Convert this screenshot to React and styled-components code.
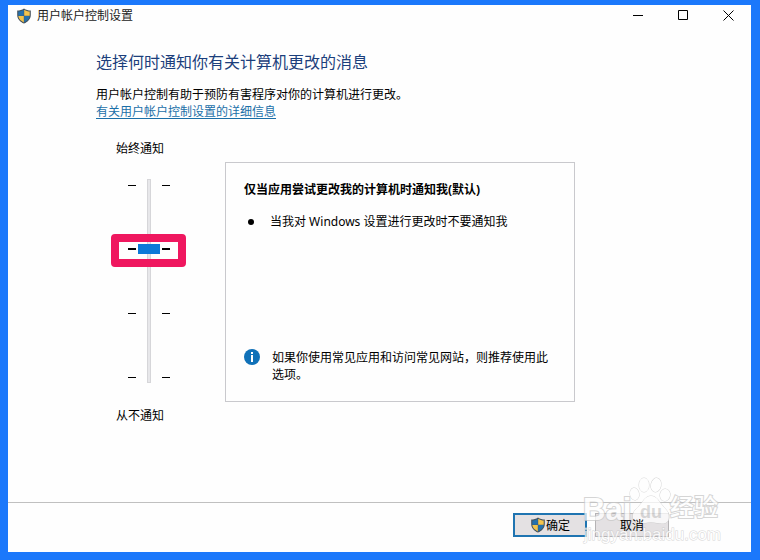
import React, { useState } from "react";
import styled, { createGlobalStyle } from "styled-components";

const GlobalStyle = createGlobalStyle`
  *, *::before, *::after { box-sizing: border-box; }
  body {
    margin: 0;
    font: 12px/17px "Noto Sans", "Noto Sans CJK SC", sans-serif;
    color: #000;
  }
  h1, h2, p, ul { margin: 0; padding: 0; }
  button { font: inherit; color: inherit; }
`;

const Desktop = styled.div`
  min-height: 100vh;
  display: flex;
  padding: 5px 9px 8px 8px;
  background: #1b78fb;
`;

const Window = styled.div`
  position: relative;
  flex: 1;
  display: flex;
  flex-direction: column;
  background: #fefefe;
`;

const TitleBar = styled.header`
  display: flex;
  align-items: center;
  height: 21px;
  padding-left: 8px;
`;

const Title = styled.span`
  flex: 1;
  margin-left: 5px;
  color: #222;
`;

const CaptionButton = styled.button`
  display: flex;
  align-items: center;
  justify-content: center;
  width: 45px;
  height: 21px;
  padding: 0;
  border: 0;
  background: transparent;
`;

const Main = styled.main`
  flex: 1;
  padding: 24px 88px 20px;
`;

const Heading = styled.h1`
  margin-bottom: 12px;
  font-size: 16px;
  line-height: 24px;
  font-weight: 400;
  color: #1c3f7c;
`;

const Link = styled.a`
  color: #1a6fa8;
  text-decoration: underline;
  text-underline-offset: 2px;
`;

const Settings = styled.div`
  display: grid;
  grid-template-columns: 88px minmax(0, 350px);
  column-gap: 41px;
  align-items: start;
  margin-top: 20px;
`;

const LevelPicker = styled.div`
  display: flex;
  flex-direction: column;
  align-items: center;
`;

const Scale = styled.div`
  position: relative;
  display: grid;
  grid-template-columns: 8px 22px 8px;
  column-gap: 2px;
  height: 204px;
  margin: 22px 0 24px 18px;
`;

const Ticks = styled.div`
  display: flex;
  flex-direction: column;
  justify-content: space-between;
  padding: 6px 0 5px;
`;

const Tick = styled.span`
  height: 1px;
  background: #000;
  box-shadow: ${(p) => (p.$current ? "0 -1px #000" : "none")};
`;

const Slider = styled.input`
  appearance: none;
  writing-mode: vertical-lr;
  direction: rtl;
  width: 22px;
  height: 204px;
  margin: 0;
  background: transparent;

  &::-webkit-slider-runnable-track {
    width: 4px;
    height: 204px;
    background: #e7e7ea;
    border: 1px solid #d6d6d9;
  }
  &::-webkit-slider-thumb {
    appearance: none;
    width: 22px;
    height: 12px;
    margin-left: -10px;
    border: solid transparent;
    border-width: 1px 0;
    background: #0c79d8;
    background-clip: padding-box;
  }
`;

const Highlight = styled.div`
  position: absolute;
  left: -17px;
  top: 55px;
  width: 75px;
  height: 33px;
  border: 8px solid #ef175f;
  border-radius: 4px;
  pointer-events: none;
`;

const LevelLabel = styled.label`
  display: block;
`;

const Panel = styled.section`
  display: flex;
  flex-direction: column;
  min-height: 240px;
  margin-top: 22px;
  padding: 18px;
  border: 1px solid #c9c9cd;
`;

const PanelTitle = styled.h2`
  font-size: 12px;
  line-height: 17px;
  font-weight: 700;
`;

const Bullets = styled.ul`
  margin-top: 15px;
  list-style: none;
`;

const Bullet = styled.li`
  display: flex;
  align-items: center;
  gap: 16px;
  padding-left: 4px;

  &::before {
    content: "";
    width: 6px;
    height: 6px;
    border-radius: 50%;
    background: #000;
  }
`;

const Recommendation = styled.div`
  display: flex;
  gap: 12px;
  margin-top: auto;
`;

const Footer = styled.footer`
  display: flex;
  justify-content: flex-end;
  gap: 8px;
  height: 50px;
  padding: 10px 82px 0 8px;
  border-top: 1px solid #c0c0c0;
`;

const DialogButton = styled.button`
  display: flex;
  align-items: center;
  justify-content: center;
  width: 74px;
  height: 24px;
  padding: 0;
  background: #e4e1e3;
  border: ${(p) => (p.$primary ? "2px solid #1f74b1" : "1px solid #b5b3b5")};
`;

const ButtonLabel = styled.span`
  position: relative;
  z-index: 1;
`;

const Watermark = styled.div`
  position: absolute;
  right: 30px;
  bottom: 8px;
  width: 138px;
  height: 68px;
  font-family: "Liberation Sans", "Noto Sans CJK SC", sans-serif;
  color: #fff;
  opacity: 0.75;
  paint-order: stroke fill;
  white-space: nowrap;
  pointer-events: none;
`;

const PawDrawing = styled.svg`
  position: absolute;
  left: 46px;
  top: 0;
`;

const MarkText = styled.span`
  position: absolute;
  left: ${(p) => p.$left}px;
  top: ${(p) => p.$top}px;
  font-size: ${(p) => p.$size}px;
  font-weight: ${(p) => p.$weight};
  line-height: ${(p) => p.$size}px;
  color: ${(p) => p.$color || "#fff"};
  -webkit-text-stroke: ${(p) => p.$stroke}px #c8c8c8;
`;

function Shield() {
  return (
    <svg width="16" height="16" viewBox="0 0 16 16" aria-hidden="true">
      <path d="M8 .5C6 2 3.600 2.600 1.200 2.600V7c0 4 2.800 6.800 6.800 8.600C12 13.800 14.800 11 14.800 7V2.600C12.400 2.600 10 2 8 .5Z" fill="#45525c" />
      <path d="M7.800 1.800C6 3 4.100 3.500 2.300 3.600v4.100h5.500Z" fill="#2471ad" />
      <path d="M8.200 1.800C10 3 11.900 3.500 13.700 3.600v4.100H8.200Z" fill="#f3c44d" />
      <path d="M2.300 8.100h5.500v6.300C4.700 12.900 2.600 11 2.300 8.100Z" fill="#f3c44d" />
      <path d="M13.700 8.100H8.200v6.300c3.100-1.500 5.200-3.400 5.500-6.300Z" fill="#2471ad" />
    </svg>
  );
}

function InfoIcon() {
  return (
    <svg width="16" height="16" viewBox="0 0 16 16" aria-hidden="true">
      <circle cx="8" cy="8" r="8" fill="#1071b8" />
      <rect x="7" y="3" width="2" height="2" fill="#fff" />
      <rect x="7" y="6" width="2" height="7" fill="#fff" />
    </svg>
  );
}

function CaptionIcon({ d }) {
  return (
    <svg width="11" height="11" viewBox="0 0 11 11" fill="none" stroke="#000" aria-hidden="true">
      <path d={d} />
    </svg>
  );
}

function Paw() {
  return (
    <PawDrawing width="44" height="52" viewBox="0 0 44 52" fill="#fff" stroke="#c8c8c8" aria-hidden="true">
      <ellipse cx="5.500" cy="18" rx="4.500" ry="6" transform="rotate(-10 5.500 18)" />
      <ellipse cx="15" cy="9" rx="5" ry="7" />
      <ellipse cx="27" cy="9" rx="5" ry="7" transform="rotate(12 27 9)" />
      <ellipse cx="36" cy="19" rx="5" ry="6" transform="rotate(12 36 19)" />
      <path d="M22 20c-6 0-8 6-12 10-4 4-7 7-6 12 2 6 8 6 12 5 4-1 8-1 12 0 6 1 11 1 12-5 1-5-3-8-6-12-4-4-6-10-12-10Z" />
    </PawDrawing>
  );
}

function TickColumn({ current }) {
  return (
    <Ticks aria-hidden="true">
      {[3, 2, 1, 0].map((n) => (
        <Tick key={n} $current={n === current} />
      ))}
    </Ticks>
  );
}

export default function App() {
  const [level, setLevel] = useState(2);
  return (
    <Desktop>
      <GlobalStyle />
      <Window>
        <TitleBar>
          <Shield />
          <Title>用户帐户控制设置</Title>
          <CaptionButton aria-label="最小化">
            <CaptionIcon d="M0 5.500h10" />
          </CaptionButton>
          <CaptionButton aria-label="最大化">
            <CaptionIcon d="M.5 .5h9v9h-9Z" />
          </CaptionButton>
          <CaptionButton aria-label="关闭">
            <CaptionIcon d="M.5 .5l10 10M10.500 .5L.5 10.500" />
          </CaptionButton>
        </TitleBar>

        <Main>
          <Heading>选择何时通知你有关计算机更改的消息</Heading>
          <p>用户帐户控制有助于预防有害程序对你的计算机进行更改。</p>
          <p>
            <Link href="#details">有关用户帐户控制设置的详细信息</Link>
          </p>

          <Settings>
            <LevelPicker>
              <LevelLabel htmlFor="level">始终通知</LevelLabel>
              <Scale>
                <TickColumn current={level} />
                <Slider
                  id="level"
                  type="range"
                  min="0"
                  max="3"
                  value={level}
                  onChange={(e) => setLevel(Number(e.target.value))}
                />
                <TickColumn current={level} />
                <Highlight />
              </Scale>
              <LevelLabel htmlFor="level">从不通知</LevelLabel>
            </LevelPicker>

            <Panel>
              <PanelTitle>仅当应用尝试更改我的计算机时通知我(默认)</PanelTitle>
              <Bullets>
                <Bullet>当我对 Windows 设置进行更改时不要通知我</Bullet>
              </Bullets>
              <Recommendation>
                <InfoIcon />
                <p>
                  如果你使用常见应用和访问常见网站，则推荐使用此
                  <br />
                  选项。
                </p>
              </Recommendation>
            </Panel>
          </Settings>
        </Main>

        <Footer>
          <DialogButton $primary>
            <Shield />
            <ButtonLabel>确定</ButtonLabel>
          </DialogButton>
          <DialogButton>
            <ButtonLabel>取消</ButtonLabel>
          </DialogButton>
        </Footer>

        <Watermark aria-hidden="true">
          <MarkText $left={0} $top={18} $size={31} $stroke={2} $weight={700}>Bai</MarkText>
          <Paw />
          <MarkText $left={57} $top={27} $size={18} $stroke={0} $weight={700} $color="#cfcfcf">du</MarkText>
          <MarkText $left={87} $top={20} $size={24} $stroke={2} $weight={500}>经验</MarkText>
          <MarkText $left={1} $top={50} $size={17} $stroke={1} $weight={400}>jingyan.baidu.com</MarkText>
        </Watermark>
      </Window>
    </Desktop>
  );
}
